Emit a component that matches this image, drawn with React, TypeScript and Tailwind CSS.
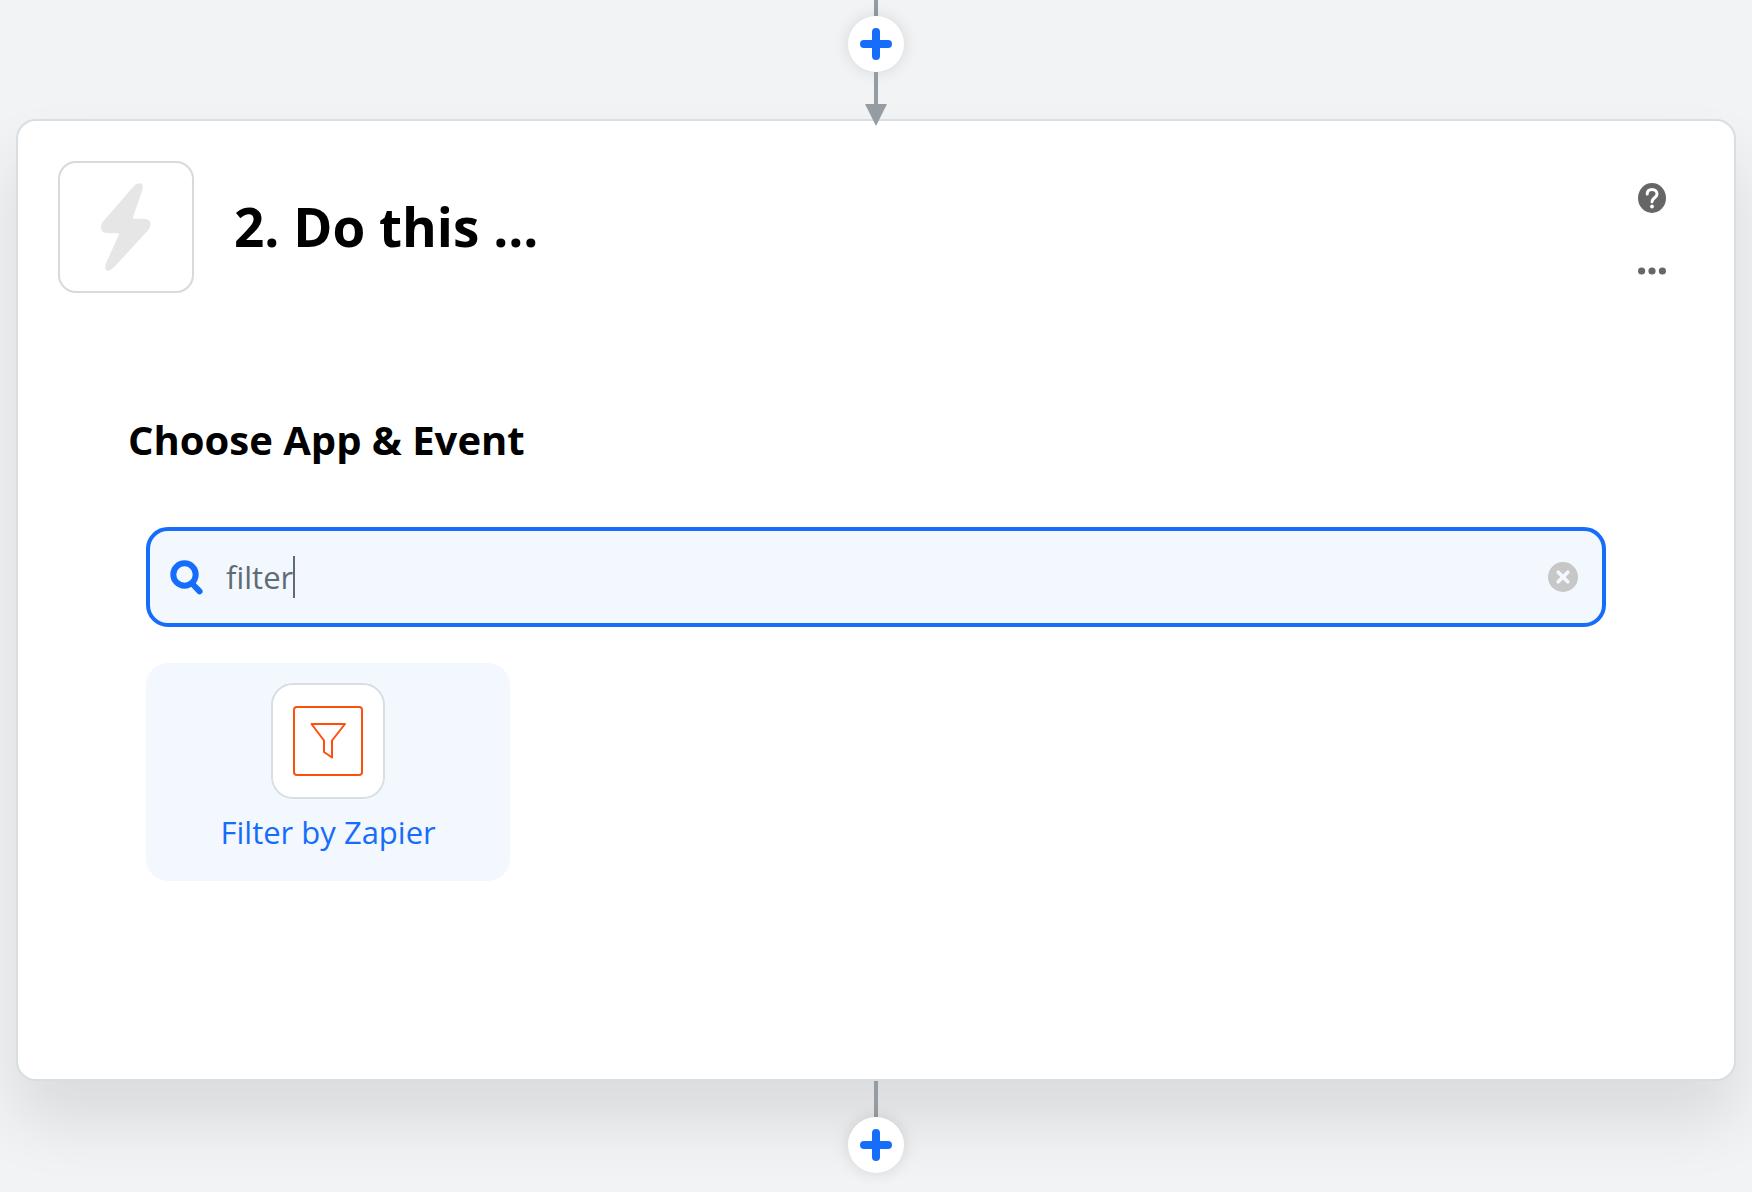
import React, { useState } from 'react';

const PlusIcon: React.FC = () => (
  <svg width="32" height="32" viewBox="0 0 32 32" aria-hidden="true">
    <path d="M16 4v24M4 16h24" fill="none" stroke="#166dfa" strokeWidth="8" strokeLinecap="round" />
  </svg>
);

const AddStepButton: React.FC<{ label: string }> = ({ label }) => (
  <button
    type="button"
    aria-label={label}
    className="flex size-14 shrink-0 items-center justify-center rounded-full bg-white shadow-[0_0_16px_rgba(0,0,0,0.12)]"
  >
    <PlusIcon />
  </button>
);

const BoltIcon: React.FC = () => (
  <svg width="50" height="88" viewBox="0 0 50 88" fill="#e6e6e6" aria-hidden="true">
    <path d="M32 4C35 0.500 38 0 40 0.500C42.500 1.500 42 5 41 8L31.500 35.500L43 36C48 36 50 38.500 49.500 42C49.500 44 48 46 46 48.500L15 82C11.500 86 8 88.500 6 87.500C3.500 86.500 4 82.500 5.500 79L18.500 50.500L6 50C2 50 0 47.500 0 44C0 42 1 40 3 37.500Z" />
  </svg>
);

const HelpIcon: React.FC = () => (
  <svg width="28" height="30" viewBox="0 0 28 30" aria-hidden="true">
    <ellipse cx="14" cy="15" rx="14" ry="15" fill="#666" />
    <path d="M9.200 11C9.200 8 11.200 6.500 14 6.500S19 8.300 19 11C19 14.800 14 14.800 14 18.800" fill="none" stroke="#fff" strokeWidth="3" strokeLinecap="round" />
    <circle cx="14" cy="23.500" r="1.900" fill="#fff" />
  </svg>
);

const DotsIcon: React.FC = () => (
  <svg width="28" height="8" viewBox="0 0 28 8" fill="#666" aria-hidden="true">
    <circle cx="3.600" cy="4" r="3.600" />
    <circle cx="14" cy="4" r="3.600" />
    <circle cx="24.400" cy="4" r="3.600" />
  </svg>
);

const SearchIcon: React.FC = () => (
  <svg width="34" height="36" viewBox="0 0 34 36" fill="none" stroke="#166dfa" aria-hidden="true">
    <circle cx="14.500" cy="15.500" r="11.200" strokeWidth="6" />
    <path d="M22.500 25L29.600 32.400" strokeWidth="6" strokeLinecap="round" />
  </svg>
);

const ClearIcon: React.FC = () => (
  <svg width="30" height="30" viewBox="0 0 30 30" aria-hidden="true">
    <circle cx="15" cy="15" r="15" fill="#c7c7c7" />
    <path d="M10.200 10.200l9.600 9.600M19.800 10.200l-9.600 9.600" stroke="#f3f8ff" strokeWidth="3.600" strokeLinecap="round" />
  </svg>
);

const FilterAppIcon: React.FC = () => (
  <svg width="70" height="70" viewBox="0 0 70 70" fill="none" stroke="#ff4f0f" aria-hidden="true">
    <rect x="1" y="1" width="68" height="68" rx="3" strokeWidth="2" />
    <path d="M18.500 18H52L39 34.500V51.500L31 46V34.500Z" strokeWidth="2" strokeLinejoin="round" />
  </svg>
);

const apps = [{ id: 'filter', name: 'Filter by Zapier' }];

export default function App() {
  const [query, setQuery] = useState('filter');

  const results = apps.filter(app => app.name.toLowerCase().includes(query.toLowerCase()));

  return (
    <div className="flex min-h-screen flex-col overflow-hidden bg-[#f2f3f5] px-4 font-['Open_Sans','Noto_Sans',sans-serif] text-black">
      {/* connector from the previous step */}
      <div className="relative z-10 -mb-2 flex flex-col items-center">
        <div className="h-4 w-1 bg-[#959da2]" />
        <AddStepButton label="Add a step before" />
        <div className="h-8 w-1 bg-[#959da2]" />
        <svg width="22" height="23" viewBox="0 0 22 23" className="block" aria-hidden="true">
          <path d="M0 0h22L11 22z" fill="#959da2" />
        </svg>
      </div>

      <main className="rounded-[20px] border-2 border-[#d8dee1] bg-white pb-[198px] shadow-[0_40px_64px_rgba(0,0,0,0.1)]">
        <header className="flex items-center gap-10 pt-10 pr-[68px] pl-10">
          <div className="flex h-[132px] w-[136px] items-center justify-center rounded-[18px] border-2 border-[#d9d9d9]">
            <BoltIcon />
          </div>
          <h1 className="flex-1 text-[53px] leading-[72px] font-bold">2. Do this ...</h1>
          <div className="flex flex-col items-center gap-[54px] pt-1">
            <button type="button" aria-label="Help" className="block">
              <HelpIcon />
            </button>
            <button type="button" aria-label="More options" className="block">
              <DotsIcon />
            </button>
          </div>
        </header>

        <section className="px-[110px] pt-[120px]">
          <h2 className="text-[40px] leading-[54px] font-bold">Choose App &amp; Event</h2>

          <div className="mt-[60px] px-[18px]">
            <div className="flex h-[100px] items-center rounded-[22px] border-4 border-[#166dfa] bg-[#f3f8ff] pr-6 pl-5">
              <SearchIcon />
              <input
                type="text"
                aria-label="Search apps"
                value={query}
                onChange={e => setQuery(e.target.value)}
                className="ml-[22px] [field-sizing:content] bg-transparent text-[31px] leading-[42px] text-[#5f6c72] caret-transparent outline-none"
              />
              <span className="h-[42px] w-0.5 bg-[#5f6c72]" />
              <button type="button" aria-label="Clear search" onClick={() => setQuery('')} className="ml-auto block">
                <ClearIcon />
              </button>
            </div>

            <ul className="mt-9 grid grid-cols-4 gap-x-px">
              {results.map(app => (
                <li key={app.id}>
                  <button
                    type="button"
                    className="flex w-full flex-col items-center rounded-[22px] bg-[#f3f8ff] pt-5 pb-7"
                  >
                    <span className="flex h-[116px] w-[114px] items-center justify-center rounded-[22px] border-2 border-[#d8dee1] bg-white">
                      <FilterAppIcon />
                    </span>
                    <span className="mt-3 text-[31px] leading-[42px] text-[#166dfa]">{app.name}</span>
                  </button>
                </li>
              ))}
            </ul>
          </div>
        </section>
      </main>

      {/* connector to the next step */}
      <div className="relative flex flex-col items-center pb-5">
        <div className="h-9 w-1 bg-[#959da2]" />
        <AddStepButton label="Add a step after" />
      </div>
    </div>
  );
}
